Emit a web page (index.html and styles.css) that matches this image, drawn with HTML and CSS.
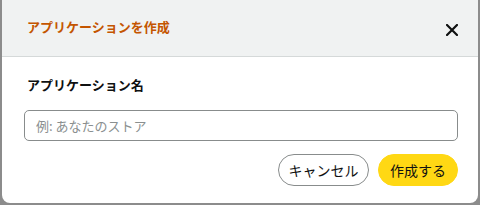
FILE: index.html
```html
<!DOCTYPE html>
<html lang="ja">
<head>
<meta charset="utf-8">
<link rel="stylesheet" href="styles.css">
</head>
<body>
<div class="modal">
  <div class="modal-header">
    <h1 class="modal-title">アプリケーションを作成</h1>
    <button class="close-btn" aria-label="閉じる">
      <svg width="12" height="12" viewBox="0 0 12 12"><path d="M1 1L11 11M11 1L1 11" stroke="#0f1111" stroke-width="2.2" stroke-linecap="square"/></svg>
    </button>
  </div>
  <div class="modal-body">
    <label class="field-label">アプリケーション名</label>
    <input class="text-input" type="text" placeholder="例: あなたのストア">
    <div class="actions">
      <button class="btn btn-secondary">キャンセル</button>
      <button class="btn btn-primary">作成する</button>
    </div>
  </div>
</div>
</body>
</html>
```
FILE: styles.css
```css
html, body {
  margin: 0;
  padding: 0;
}
body {
  width: 480px;
  height: 205px;
  background: #8c8c8c;
  font-family: "Noto Sans CJK JP", "Noto Sans", sans-serif;
  padding: 0 2px 2px 2px;
  box-sizing: border-box;
  overflow: hidden;
}
.modal {
  width: 476px;
  height: 203px;
  background: #ffffff;
  border-radius: 0 0 8px 8px;
  overflow: hidden;
  display: flex;
  flex-direction: column;
}
.modal-header {
  height: 56px;
  background: #f0f2f2;
  border-bottom: 1px solid #d5d9d9;
  display: flex;
  align-items: center;
  justify-content: space-between;
  padding: 0 20px 4px 25px;
  box-sizing: content-box;
  height: 52px;
}
.modal-title {
  margin: 0;
  font-size: 13px;
  font-weight: 700;
  color: #c45500;
}
.close-btn {
  border: 0;
  background: transparent;
  padding: 0;
  margin-top: 8px;
  width: 12px;
  height: 12px;
  display: flex;
}
.modal-body {
  display: flex;
  flex-direction: column;
  padding: 18px 20px 0 22px;
}
.field-label {
  font-size: 13px;
  font-weight: 700;
  color: #0f1111;
  padding-left: 3px;
  line-height: 20px;
}
.text-input {
  margin-top: 15px;
  height: 31px;
  box-sizing: border-box;
  border: 1px solid #888c8c;
  border-radius: 5px;
  padding: 0 11px;
  font-family: inherit;
  font-size: 13px;
  color: #0f1111;
  outline: none;
}
.text-input::placeholder {
  color: #8a8f8f;
}
.actions {
  display: flex;
  justify-content: flex-end;
  gap: 9px;
  margin-top: 13px;
}
.btn {
  height: 32px;
  border-radius: 16px;
  font-family: inherit;
  font-size: 14px;
  color: #0f1111;
  padding: 0;
  cursor: pointer;
}
.btn-secondary {
  width: 91px;
  background: #ffffff;
  border: 1px solid #888c8c;
}
.btn-primary {
  width: 80px;
  background: #ffd814;
  border: 1px solid #ffd814;
}
```
